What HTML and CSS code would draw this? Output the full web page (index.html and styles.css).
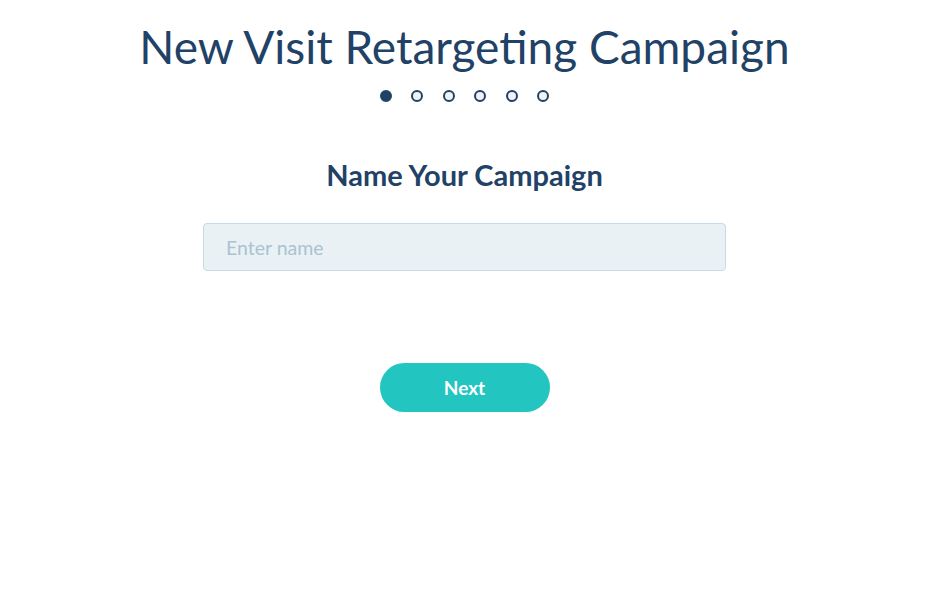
FILE: index.html
```html
<!DOCTYPE html>
<html lang="en">
<head>
    <meta charset="UTF-8">
    <meta name="viewport" content="width=device-width, initial-scale=1.0">
    <title>New Visit Retargeting Campaign</title>
    <link rel="stylesheet" href="styles.css">
</head>
<body>
    <div class="wizard">
        <h1 class="wizard-title">New Visit Retargeting Campaign</h1>

        <ul class="steps">
            <li class="step active"></li>
            <li class="step"></li>
            <li class="step"></li>
            <li class="step"></li>
            <li class="step"></li>
            <li class="step"></li>
        </ul>

        <form class="step-form">
            <h2 class="step-title">Name Your Campaign</h2>
            <input type="text" class="name-input" placeholder="Enter name">
            <button type="submit" class="next-btn">Next</button>
        </form>
    </div>
</body>
</html>
```

FILE: styles.css
```css
body { margin: 0; font-family: Lato, "Open Sans", sans-serif; color: #1f4266; background: #fff; }
.wizard { display: flex; flex-direction: column; align-items: center; width: 929px; padding-top: 19px; }
.wizard-title { margin: 0; font-size: 46px; font-weight: 400; line-height: 56px; }
.steps { list-style: none; display: flex; gap: 19.5px; margin: 15px 0 0; padding: 0; }
.step { width: 8px; height: 8px; border: 2px solid #1f4266; border-radius: 50%; background: #eef3f6; }
.step.active { background: #1f4266; }
.step-form { display: flex; flex-direction: column; align-items: center; }
.step-title { margin: 55px 0 0; font-size: 29px; font-weight: 700; line-height: 36px; }
.name-input { box-sizing: border-box; width: 523px; height: 48px; margin-top: 30px; padding: 0 22px; font-family: inherit; font-size: 19.5px; color: #1f4266; background: #eaf1f5; border: 1px solid #c6dbe6; border-radius: 4px; outline: none; }
.name-input::placeholder { color: #a9c3d1; }
.next-btn { width: 170px; height: 49px; margin-top: 92px; font-family: inherit; font-size: 19px; font-weight: 700; color: #fff; background: #22c5bf; border: none; border-radius: 25px; cursor: pointer; }
```
